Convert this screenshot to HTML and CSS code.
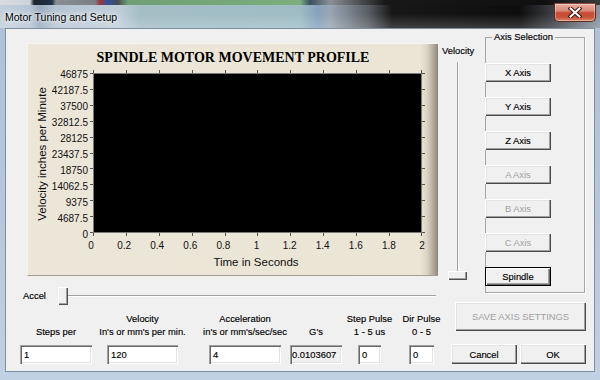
FILE: index.html
```html
<!DOCTYPE html>
<html>
<head>
<meta charset="utf-8">
<title>Motor Tuning and Setup</title>
<link rel="stylesheet" href="styles.css">
</head>
<body>
<div class="window">
  <div class="titlebar">
    <div class="title">Motor Tuning and Setup</div>
    <div class="close">
      <svg width="14" height="11" viewBox="0 0 14 11">
        <path d="M2.5 1.5 L11.5 9.5 M11.5 1.5 L2.5 9.5" stroke="#3a1510" stroke-width="4" stroke-linecap="square" fill="none"/>
        <path d="M2.5 1.5 L11.5 9.5 M11.5 1.5 L2.5 9.5" stroke="#ffffff" stroke-width="2" stroke-linecap="square" fill="none"/>
      </svg>
    </div>
  </div>
  <div class="client">
    <div class="left">
      <div class="panel">
        <div class="chart-title">SPINDLE MOTOR MOVEMENT PROFILE</div>
        <svg class="plot" width="409" height="207" viewBox="0 0 409 207">
          <rect x="65.5" y="5.5" width="328" height="159" fill="#000" stroke="#7a7a7a"/>
          <path stroke="#555" stroke-width="1" fill="none" d="
            M65.5 2 V5 M98.5 2 V5 M131.5 2 V5 M164.5 2 V5 M197.5 2 V5 M229.5 2 V5 M262.5 2 V5 M295.5 2 V5 M328.5 2 V5 M361.5 2 V5 M393.5 2 V5
            M65.5 165 V168 M98.5 165 V168 M131.5 165 V168 M164.5 165 V168 M197.5 165 V168 M229.5 165 V168 M262.5 165 V168 M295.5 165 V168 M328.5 165 V168 M361.5 165 V168 M393.5 165 V168
            M62 5.5 H65 M62 21.5 H65 M62 37.5 H65 M62 53.5 H65 M62 69.5 H65 M62 85.5 H65 M62 100.5 H65 M62 116.5 H65 M62 132.5 H65 M62 148.5 H65 M62 164.5 H65
            M394 5.5 H397 M394 21.5 H397 M394 37.5 H397 M394 53.5 H397 M394 69.5 H397 M394 85.5 H397 M394 100.5 H397 M394 116.5 H397 M394 132.5 H397 M394 148.5 H397 M394 164.5 H397"/>
          <g class="ylab" text-anchor="end">
            <text x="60" y="9.6">46875</text>
            <text x="60" y="25.6">42187.5</text>
            <text x="60" y="41.6">37500</text>
            <text x="60" y="57.6">32812.5</text>
            <text x="60" y="73.6">28125</text>
            <text x="60" y="89.6">23437.5</text>
            <text x="60" y="105.6">18750</text>
            <text x="60" y="121.6">14062.5</text>
            <text x="60" y="137.6">9375</text>
            <text x="60" y="153.6">4687.5</text>
            <text x="60" y="169.6">0</text>
          </g>
          <g class="xlab" text-anchor="middle">
            <text x="63" y="180.6">0</text>
            <text x="96.1" y="180.6">0.2</text>
            <text x="129.2" y="180.6">0.4</text>
            <text x="162.3" y="180.6">0.6</text>
            <text x="195.4" y="180.6">0.8</text>
            <text x="228.5" y="180.6">1</text>
            <text x="261.6" y="180.6">1.2</text>
            <text x="294.7" y="180.6">1.4</text>
            <text x="327.8" y="180.6">1.6</text>
            <text x="360.9" y="180.6">1.8</text>
            <text x="394" y="180.6">2</text>
          </g>
          <text class="axtitle" x="228" y="198" text-anchor="middle">Time in Seconds</text>
          <text class="axtitle" transform="translate(18,86) rotate(-90)" x="0" y="0" text-anchor="middle">Velocity inches per Minute</text>
        </svg>
      </div>
      <div class="accel">
        <span class="accel-label">Accel</span>
        <div class="hthumb"></div>
        <div class="htrack"></div>
      </div>
      <div class="fields">
        <div class="field f1">
          <div class="flabel"><span>Steps per</span></div>
          <input class="edit" type="text" value="1">
        </div>
        <div class="field f2">
          <div class="flabel"><span>Velocity</span><span>In's or mm's per min.</span></div>
          <input class="edit" type="text" value="120">
        </div>
        <div class="field f3">
          <div class="flabel"><span>Acceleration</span><span>in's or mm's/sec/sec</span></div>
          <input class="edit" type="text" value="4">
        </div>
        <div class="field f4">
          <div class="flabel"><span>G's</span></div>
          <input class="edit ro" type="text" value="0.0103607" readonly>
        </div>
        <div class="field f5">
          <div class="flabel"><span>Step Pulse</span><span>1 - 5 us</span></div>
          <input class="edit" type="text" value="0">
        </div>
        <div class="field f6">
          <div class="flabel"><span>Dir Pulse</span><span>0 - 5</span></div>
          <input class="edit" type="text" value="0">
        </div>
      </div>
    </div>
    <div class="right">
      <div class="top">
        <div class="vel">
          <div class="vel-label">Velocity</div>
          <div class="vslider"><div class="vtrack"></div><div class="vthumb"></div></div>
        </div>
        <fieldset class="axes">
          <legend>Axis Selection</legend>
          <button class="btn axis">X Axis</button>
          <button class="btn axis">Y Axis</button>
          <button class="btn axis">Z Axis</button>
          <button class="btn axis" disabled>A Axis</button>
          <button class="btn axis" disabled>B Axis</button>
          <button class="btn axis" disabled>C Axis</button>
          <button class="btn axis default">Spindle</button>
        </fieldset>
      </div>
      <button class="btn save" disabled>SAVE AXIS SETTINGS</button>
      <div class="okrow">
        <button class="btn dlg">Cancel</button>
        <button class="btn dlg">OK</button>
      </div>
    </div>
  </div>
</div>
</body>
</html>
```

FILE: styles.css
```css
html, body {
  margin: 0;
  padding: 0;
}
body {
  width: 600px;
  height: 380px;
  overflow: hidden;
  background: linear-gradient(to bottom, #afc1d4 0%, #b6c8da 60%, #bfd1e3 100%);
  font-family: "Liberation Sans", Arial, sans-serif;
  font-size: 9.4px;
  color: #000;
}
.window {
  width: 600px;
  height: 380px;
  display: flex;
  flex-direction: column;
}
.titlebar {
  height: 28px;
  flex: none;
  display: flex;
  justify-content: space-between;
  align-items: flex-start;
  background:
    linear-gradient(to right, #d6dbe0 0, #cdd4da 30px, #1c2430 34px, #203048 52px, #8a8f96 56px, #7a7f86 95px, #a03838 100px, #3050a0 108px, #484c52 118px, #6f9f72 128px, #7cae7e 300px, #3a5060 310px, #8a9098 330px, #181818 385px, #101010 545px, #3a3a3a 600px) top left / 100% 5px no-repeat,
    linear-gradient(to bottom, rgba(255,255,255,0) 0, rgba(255,255,255,0) 14px, rgba(255,255,255,0.18) 28px),
    linear-gradient(to right, #c2cfdc 0px, #b7c6d6 30px, #96a8bc 40px, #b4c4d2 55px, #bfcdd9 120px, #a4bec6 140px, #9fbcc4 300px, #86a2bc 318px, #9aa6b4 330px, #5a5f66 368px, #171717 392px, #0e0e0e 520px, #3a3d42 552px, #8a96a4 600px);
}
.title {
  font-size: 10.5px;
  line-height: 14px;
  padding: 10px 0 0 5px;
  color: #000;
  text-shadow: 0 0 6px #fff, 0 0 3px rgba(255,255,255,0.9), 0 0 10px rgba(255,255,255,0.8);
}
.close {
  width: 42px;
  height: 19px;
  box-sizing: border-box;
  margin: 3px 4px 0 0;
  display: flex;
  align-items: center;
  justify-content: center;
  border: 1px solid #5e2a22;
  border-top-color: #8a4a40;
  border-radius: 0 0 5px 5px;
  background: linear-gradient(to bottom, #e9ad9e 0%, #d98a79 40%, #c84a32 52%, #c75238 78%, #de8a6c 100%);
  box-shadow: inset 0 0 0 1px rgba(255,255,255,0.35);
}
.client {
  margin: 0 5px;
  width: 590px;
  height: 344px;
  box-sizing: border-box;
  border: 1px solid #7d8fa2;
  background: #f0f0f0;
  display: flex;
  -webkit-text-stroke: 0.15px #000;
}
.left {
  width: 434px;
  flex: none;
  display: flex;
  flex-direction: column;
}
.panel {
  margin: 14px 0 0 21px;
  width: 411px;
  height: 233px;
  box-sizing: border-box;
  border-top: 1px solid #f8f5ee;
  border-left: 1px solid #f8f5ee;
  border-bottom: 1px solid #a39d90;
  background: linear-gradient(to right, #ece6d8 0, #ebe5d6 calc(100% - 18px), #dbd4c5 calc(100% - 11px), #b3ac9f calc(100% - 5px), #8d877b 100%);
  display: flex;
  flex-direction: column;
  -webkit-text-stroke: 0;
}
.chart-title {
  height: 24px;
  box-sizing: border-box;
  padding-top: 5px;
  line-height: 18px;
  text-align: center;
  font-family: "Liberation Serif", "Times New Roman", serif;
  font-weight: bold;
  font-size: 14px;
  color: #000;
}
.plot {
  display: block;
}
.plot text {
  font-family: "Liberation Sans", Arial, sans-serif;
  font-size: 10px;
  fill: #111;
}
.plot .axtitle {
  font-size: 11.5px;
}
.accel {
  margin-top: 11px;
  height: 18px;
  display: flex;
  align-items: center;
  margin-right: 4px;
}
.accel-label {
  margin-left: 17px;
  width: 35px;
  line-height: 12px;
}
.hthumb {
  width: 10px;
  height: 18px;
  box-sizing: border-box;
  background: #f0f0f0;
  box-shadow: inset 1px 1px 0 #fff, inset -1px -1px 0 #505050, inset -2px -2px 0 #a0a0a0;
}
.htrack {
  flex: 1;
  height: 2px;
  box-sizing: border-box;
  border-top: 1px solid #a0a0a0;
  border-bottom: 1px solid #fff;
}
.fields {
  margin-top: 6px;
  display: flex;
}
.field {
  display: flex;
  flex-direction: column;
  align-items: center;
}
.flabel {
  height: 27px;
  display: flex;
  flex-direction: column;
  justify-content: flex-end;
  align-items: center;
  line-height: 13px;
  white-space: nowrap;
  margin-bottom: 7px;
}
.f1 { width: 72px; margin-left: 14px; }
.f2 { width: 71px; margin-left: 15px; }
.f3 { width: 72px; margin-left: 31px; }
.f4 { width: 52px; margin-left: 9px; }
.f5 { width: 23px; margin-left: 16px; }
.f6 { width: 25px; margin-left: 28px; }
.edit {
  width: 100%;
  height: 19px;
  box-sizing: border-box;
  margin: 0;
  border: none;
  outline: none;
  padding: 0 0 0 4px;
  font-family: "Liberation Sans", Arial, sans-serif;
  font-size: 9.4px;
  color: #000;
  background: #fff;
  box-shadow: inset 1px 1px 0 #a0a0a0, inset 2px 2px 0 #696969, inset -1px -1px 0 #fff, inset -2px -2px 0 #e3e3e3;
}
.edit.ro {
  background: #f0f0f0;
  padding-left: 2px;
}
.right {
  width: 154px;
  flex: none;
  display: flex;
  flex-direction: column;
}
.top {
  margin-top: 2px;
  display: flex;
}
.vel {
  width: 35px;
  display: flex;
  flex-direction: column;
}
.vel-label {
  margin-top: 14px;
  padding-left: 2px;
  line-height: 12px;
}
.vslider {
  margin-top: 5px;
  height: 218px;
  display: flex;
  flex-direction: column;
  align-items: center;
}
.vtrack {
  flex: 1;
  width: 2px;
  box-sizing: border-box;
  border-left: 1px solid #a0a0a0;
  border-right: 1px solid #fff;
}
.vthumb {
  width: 19px;
  height: 9px;
  background: #f0f0f0;
  box-shadow: inset 1px 1px 0 #fff, inset -1px -1px 0 #505050, inset -2px -2px 0 #a0a0a0;
}
.axes {
  margin: 0 0 0 10px;
  width: 100px;
  box-sizing: border-box;
  padding: 0 0 6px 0;
  border: 1px solid #a6a6a6;
  box-shadow: 1px 1px 0 #fff;
  display: flex;
  flex-direction: column;
  min-inline-size: 0;
}
.axes legend {
  margin-left: 6px;
  padding: 0 2px;
  line-height: 12px;
  font-size: 9.4px;
}
.btn {
  margin: 0;
  padding: 0;
  border: none;
  background: #f0f0f0;
  font-family: "Liberation Sans", Arial, sans-serif;
  font-size: 9.4px;
  color: #000;
  -webkit-text-stroke: 0.15px #000;
  box-sizing: border-box;
  box-shadow: inset 1px 1px 0 #fff, inset -1px -1px 0 #4a4a4a, inset -2px -2px 0 #a0a0a0, inset 2px 2px 0 #e3e3e3;
}
.btn:disabled {
  color: #a0a0a0;
  -webkit-text-stroke: 0;
}
.axis {
  width: 66px;
  height: 19px;
  margin: 15px 0 0 -1px;
}
.axis:first-of-type {
  margin-top: 20px;
}
.axis.default {
  border: 1px solid #000;
  box-shadow: inset 1px 1px 0 #fff, inset -1px -1px 0 #696969, inset -2px -2px 0 #a0a0a0;
}
.save {
  margin: 9px 0 0 15px;
  width: 131px;
  height: 29px;
}
.okrow {
  margin: 13px 0 0 11px;
  display: flex;
  gap: 3px;
}
.dlg {
  width: 66px;
  height: 20px;
}
```
